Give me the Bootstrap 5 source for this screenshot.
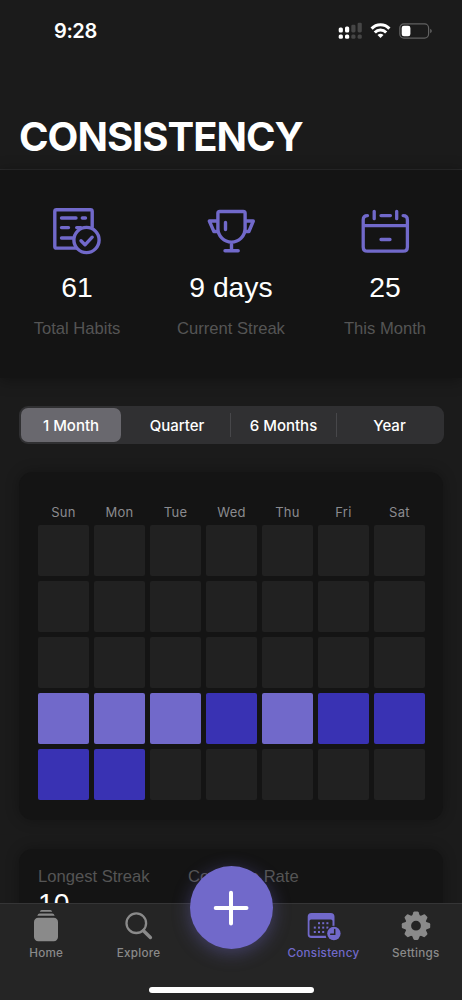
<!DOCTYPE html>
<html lang="en">
<head>
<meta charset="utf-8">
<meta name="viewport" content="width=device-width, initial-scale=1">
<title>Consistency</title>
<link href="https://cdn.jsdelivr.net/npm/bootstrap@5.3.0/dist/css/bootstrap.min.css" rel="stylesheet">
<style>
  :root { --accent: #7169ca; --accent-deep: #3932b3; --panel: #141414; --page: #1b1b1b; }
  body { background: var(--page); color: #fff; font-family: Inter, "Liberation Sans", sans-serif; }
  .screen { height: 1000px; overflow: hidden; }
  .statusbar { height: 62px; padding: 0 30px 0 54px; }
  .clock { font-size: 20px; font-weight: 600; line-height: 62px; letter-spacing: -.4px; }
  .app-header { height: 170px; border-bottom: 1px solid #2a2a2b; }
  .page-title { font-size: 40px; font-weight: 700; line-height: 48px; padding: 51px 0 0 19px; letter-spacing: -1px; margin: 0; }
  .helv { font-family: "Liberation Sans", Arial, sans-serif; }
  .stats { height: 208px; padding-top: 35px; background: var(--panel); box-shadow: 0 2px 14px rgba(0,0,0,.35); }
  .accent-ico { color: var(--accent); }
  .stat-value { font-size: 28.3px; line-height: 32px; margin-top: 16px; }
  .stat-label { font-size: 16.6px; line-height: 20px; color: #555; }
  .segments { margin: 28px 18px 0 19px; height: 38px; border-radius: 9px; background: #303032; padding: 2px; }
  .segment { font-size: 15px; font-weight: 500; line-height: 35px; border-radius: 7px; position: relative; }
  .segment.active { background: #69686e; }
  .segment.ruled { border-right: 1px solid transparent; border-image: linear-gradient(transparent 6px, #47474a 6px 28px, transparent 28px) 1; }
  .panel { background: var(--panel); border-radius: 14px; box-shadow: 0 0 14px rgba(0,0,0,.3); margin: 28px 19px 0; padding: 0 19px; }
  .month { height: 348px; padding-top: 31px; }
  .month-grid { display: grid; grid-template-columns: repeat(7, 51px); gap: 5px; }
  .weekday { font-size: 13px; line-height: 18px; height: 17px; color: #8b8b8f; letter-spacing: .3px; }
  .day { height: 51px; background: #212121; border-radius: 2px; }
  .day.some { background: var(--accent); }
  .day.full { background: var(--accent-deep); }
  .records { height: 200px; padding-top: 18px; margin-top: 29px; }
  .records .stat-label { width: 150px; }
  .records .stat-value { margin-top: 0; }
  .tabbar { height: 97px; background: #252525; border-top: 1px solid #353536; color: #8a8a8a; }
  .tab { flex: 1 1 0; font-size: 11.7px; font-weight: 500; letter-spacing: .25px; }
  .tab svg { display: block; margin: 3px auto 0; }
  .tab span { display: block; line-height: 16px; margin-top: 2px; }
  .tab.current { color: var(--accent); }
  .fab { position: absolute; left: 50%; top: -38px; width: 83px; height: 83px; margin-left: -41.5px; border-radius: 50%; background: var(--accent); box-shadow: 0 4px 18px rgba(113,105,202,.4); }
  .home-bar { position: absolute; left: 149px; bottom: 7px; width: 165px; height: 6px; border-radius: 3px; background: #fff; }
</style>
</head>
<body>
<div class="screen position-relative">
  <header class="app-header">
    <div class="statusbar d-flex justify-content-between">
      <span class="clock">9:28</span>
      <svg width="96" height="20" viewBox="0 0 96 20" style="margin-top:21px">
        <g fill="#fff"><rect x="2.7" y="6.5" width="4.2" height="5" rx="1.5"/><rect x="9" y="5.5" width="4.2" height="6" rx="1.5"/><rect x="2.7" y="13.5" width="4.2" height="4.2" rx="1.5"/><rect x="9" y="13.5" width="4.2" height="4.2" rx="1.5"/></g>
        <g fill="#464646"><rect x="15.3" y="3.7" width="4.2" height="7.8" rx="1.4"/><rect x="21.6" y="1.7" width="4.2" height="9.8" rx="1.4"/><rect x="15.3" y="13.5" width="4.2" height="4.2" rx="1.5"/><rect x="21.6" y="13.5" width="4.2" height="4.2" rx="1.5"/></g>
        <g fill="none" stroke="#fff" stroke-width="3"><path d="M35.6 7.6a12.2 12.2 0 0 1 17.8 0"/><path d="M38.8 11.5a7.8 7.8 0 0 1 11.4 0"/></g>
        <path fill="#fff" d="M41.5 13.9q3-2.1 6 0L44.5 17z"/>
        <rect x="63.8" y="2.9" width="28.8" height="14.2" rx="4" fill="none" stroke="#626262" stroke-width="1.2"/>
        <rect x="65.7" y="4.7" width="8.7" height="10.6" rx="2.2" fill="#fff"/>
        <path fill="#626262" d="M94.2 7.7q1.6.8 1.6 2.3t-1.6 2.3z"/>
      </svg>
    </div>
    <h1 class="page-title">CONSISTENCY</h1>
  </header>

  <section class="stats position-relative helv">
    <div class="row g-0 text-center">
      <div class="col-4">
        <svg class="accent-ico d-block mx-auto" width="60" height="50" viewBox="17 10 60 50" fill="none" stroke="currentColor" stroke-width="3.4" stroke-linecap="round" stroke-linejoin="round">
          <path d="M62.2 32V16.4q0-1.7-1.7-1.7h-34q-1.700 0-1.700 1.700v35q0 1.700 1.700 1.700H46M31.500 23H46M52.300 23h3.200M31.500 32.600h7M46.700 32.600h4M31.500 43h11"/>
          <circle cx="56.500" cy="45" r="12.600"/><path d="m51 45.800 4 4 7.200-7.600"/>
        </svg>
        <div class="stat-value">61</div><div class="stat-label mt-3">Total Habits</div>
      </div>
      <div class="col-4">
        <svg class="accent-ico d-block mx-auto" width="60" height="50" viewBox="16.5 10 60 50" fill="none" stroke="currentColor" stroke-width="3.4" stroke-linecap="round" stroke-linejoin="round">
          <path d="M33.4 18.3q0-1.8 1.8-1.8h23.6q1.8 0 1.8 1.8V33.5a13.6 13.6 0 0 1-27.2 0zM33 26h-8.2l4.600 10.500h4.400M61 26h7.800l-4.400 10.500H60M47 47.500v8M40.500 55.700h13.200M41 27.500v7"/>
        </svg>
        <div class="stat-value">9 days</div><div class="stat-label mt-3">Current Streak</div>
      </div>
      <div class="col-4">
        <svg class="accent-ico d-block mx-auto" width="60" height="50" viewBox="15.3 10 60 50" fill="none" stroke="currentColor" stroke-width="3.3" stroke-linecap="round" stroke-linejoin="round">
          <path d="M27.8 20.6q-4.3 0-4.3 4.3v27q0 4.2 4.3 4.2h35.6q4.3 0 4.3-4.2v-27q0-4.3-4.3-4.3M41.300 20.600h9.400M34.500 16.300v7.400M57 16.300v7.400M24 30.600h43.500M41.300 44.500h9"/>
        </svg>
        <div class="stat-value">25</div><div class="stat-label mt-3">This Month</div>
      </div>
    </div>
  </section>

  <nav class="segments d-flex text-center">
    <div class="segment active" style="width:100px">1 Month</div>
    <div class="segment ruled" style="width:110px;padding-left:3px">Quarter</div>
    <div class="segment ruled" style="width:106px">6 Months</div>
    <div class="segment flex-fill">Year</div>
  </nav>

  <section class="panel month">
    <div class="month-grid text-center">
      <div class="weekday">Sun</div><div class="weekday">Mon</div><div class="weekday">Tue</div><div class="weekday">Wed</div><div class="weekday">Thu</div><div class="weekday">Fri</div><div class="weekday">Sat</div>
      <div class="day"></div><div class="day"></div><div class="day"></div><div class="day"></div><div class="day"></div><div class="day"></div><div class="day"></div>
      <div class="day"></div><div class="day"></div><div class="day"></div><div class="day"></div><div class="day"></div><div class="day"></div><div class="day"></div>
      <div class="day"></div><div class="day"></div><div class="day"></div><div class="day"></div><div class="day"></div><div class="day"></div><div class="day"></div>
      <div class="day some"></div><div class="day some"></div><div class="day some"></div><div class="day full"></div><div class="day some"></div><div class="day full"></div><div class="day full"></div>
      <div class="day full"></div><div class="day full"></div><div class="day"></div><div class="day"></div><div class="day"></div><div class="day"></div><div class="day"></div>
    </div>
  </section>

  <section class="panel records helv">
    <div class="d-flex">
      <div><div class="stat-label">Longest Streak</div><div class="stat-value">10</div></div>
      <div><div class="stat-label">Complete Rate</div></div>
    </div>
  </section>

  <nav class="tabbar position-absolute bottom-0 start-0 end-0">
    <div class="d-flex text-center">
      <div class="tab">
        <svg width="36" height="36" viewBox="0 0 36 36" fill="currentColor"><rect x="6" y="10.8" width="24" height="23.4" rx="4.2"/><path d="M9.3 8.8q.7-2.2 2.4-2.2h12.6q1.7 0 2.4 2.2zM11.8 4.8q.5-1.7 1.8-1.7h8.8q1.3 0 1.8 1.7z"/></svg>
        <span>Home</span>
      </div>
      <div class="tab">
        <svg width="36" height="36" viewBox="0 0 36 36" fill="none" stroke="currentColor"><circle cx="15.3" cy="16.2" r="9.8" stroke-width="2.3"/><path d="m22.5 23.8 6.9 6.7" stroke-width="3.4" stroke-linecap="round"/></svg>
        <span>Explore</span>
      </div>
      <div class="tab"></div>
      <div class="tab current">
        <svg width="36" height="36" viewBox="0 0 36 36" fill="currentColor">
          <path fill-rule="evenodd" d="M6.5 6h19.2q3.8 0 3.8 3.8v13a8.8 8.8 0 0 0-2-.2V14q0-1.5-1.5-1.5H6Q4.5 12.500 4.500 14V27.300q0 1.500 1.500 1.500H20.800q.1 1.200.6 2.200H6.500Q2.700 31 2.700 27.200V9.800Q2.700 6 6.500 6z"/>
          <g><rect x="13" y="15.200" width="2" height="2"/><rect x="17.200" y="15.200" width="2" height="2"/><rect x="21.400" y="15.200" width="2" height="2"/><rect x="8.800" y="19.600" width="2" height="2"/><rect x="13" y="19.600" width="2" height="2"/><rect x="17.200" y="19.600" width="2" height="2"/><rect x="21.400" y="19.600" width="2" height="2"/><rect x="8.800" y="24" width="2" height="2"/><rect x="13" y="24" width="2" height="2"/><rect x="17.200" y="24" width="2" height="2"/></g>
          <circle cx="28.900" cy="26.500" r="7.800" fill="#252525"/><circle cx="28.900" cy="26.500" r="6.700"/>
          <path d="M29.700 22.400v4.800h-4" fill="none" stroke="#252525" stroke-width="1.500" stroke-linecap="round"/>
        </svg>
        <span>Consistency</span>
      </div>
      <div class="tab">
        <svg width="36" height="36" viewBox="-18 -18.700 36 36" fill="currentColor">
          <circle r="7.900" fill="none" stroke="currentColor" stroke-width="6"/>
          <g><path id="cog" d="M-4-9.500-2.600-13.400Q-2.300-14.200-1.500-14.200h3Q2.300-14.200 2.600-13.400L4-9.500z"/>
          <use href="#cog" transform="rotate(45)"/><use href="#cog" transform="rotate(90)"/><use href="#cog" transform="rotate(135)"/><use href="#cog" transform="rotate(180)"/><use href="#cog" transform="rotate(225)"/><use href="#cog" transform="rotate(270)"/><use href="#cog" transform="rotate(315)"/></g>
        </svg>
        <span>Settings</span>
      </div>
    </div>
    <div class="fab d-flex align-items-center justify-content-center">
      <svg width="40" height="40" viewBox="0 0 40 40" fill="none" stroke="#fff" stroke-width="4" stroke-linecap="round"><path d="M20 4.700v30.800M4.700 20h30.800"/></svg>
    </div>
    <div class="home-bar"></div>
  </nav>
</div>
<script src="https://cdn.jsdelivr.net/npm/bootstrap@5.3.0/dist/js/bootstrap.bundle.min.js"></script>
</body>
</html>
